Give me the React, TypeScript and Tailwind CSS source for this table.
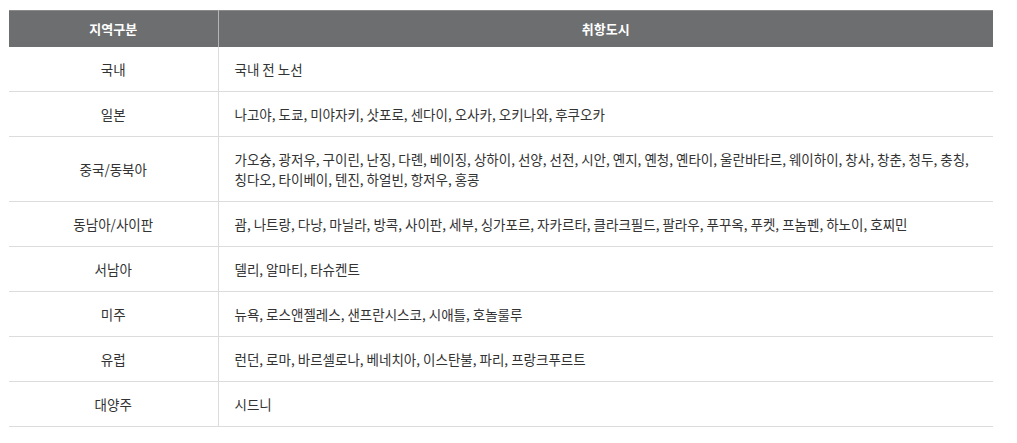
const ROWS: { region: string; cities: string }[] = [
  { region: "국내", cities: "국내 전 노선" },
  { region: "일본", cities: "나고야, 도쿄, 미야자키, 삿포로, 센다이, 오사카, 오키나와, 후쿠오카" },
  {
    region: "중국/동북아",
    cities:
      "가오슝, 광저우, 구이린, 난징, 다롄, 베이징, 상하이, 선양, 선전, 시안, 옌지, 옌청, 옌타이, 울란바타르, 웨이하이, 창사, 창춘, 청두, 충칭, 칭다오, 타이베이, 텐진, 하얼빈, 항저우, 홍콩",
  },
  {
    region: "동남아/사이판",
    cities:
      "괌, 나트랑, 다낭, 마닐라, 방콕, 사이판, 세부, 싱가포르, 자카르타, 클라크필드, 팔라우, 푸꾸옥, 푸켓, 프놈펜, 하노이, 호찌민",
  },
  { region: "서남아", cities: "델리, 알마티, 타슈켄트" },
  { region: "미주", cities: "뉴욕, 로스앤젤레스, 샌프란시스코, 시애틀, 호놀룰루" },
  { region: "유럽", cities: "런던, 로마, 바르셀로나, 베네치아, 이스탄불, 파리, 프랑크푸르트" },
  { region: "대양주", cities: "시드니" },
];

export default function App() {
  return (
    <div className="min-h-screen bg-white pt-[10px] pl-[9px] font-['Noto_Sans_CJK_KR','Noto_Sans',sans-serif] text-[13.5px] text-[#333]">
      <table className="w-[984px] table-fixed border-collapse">
        <colgroup>
          <col className="w-[209px]" />
          <col />
        </colgroup>
        <thead>
          <tr className="h-[36px] border-t border-[#8a8a8a] bg-[#6d6e70] text-[13px] text-white">
            <th className="border-r border-[#b5b5b5] p-0 font-bold leading-5">지역구분</th>
            <th className="p-0 font-bold leading-5">취항도시</th>
          </tr>
        </thead>
        <tbody>
          {ROWS.map((row) => (
            <tr key={row.region} className="border-b border-[#dcdcdc]">
              <td className="border-r border-[#dcdcdc] py-3 text-center leading-5">{row.region}</td>
              <td className="break-keep py-3 pl-4 pr-2 leading-5">{row.cities}</td>
            </tr>
          ))}
        </tbody>
      </table>
    </div>
  );
}
